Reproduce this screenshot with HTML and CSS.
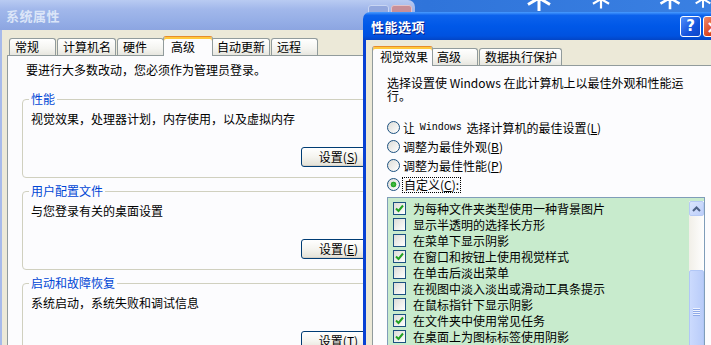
FILE: index.html
```html
<!DOCTYPE html>
<html lang="zh-CN">
<head>
    <meta charset="UTF-8">
    <title>系统属性 - 性能选项</title>
    <link rel="stylesheet" href="styles.css">
</head>
<body>
<div class="desktop">
    <svg class="flake flake-a" width="30" height="30" viewBox="-15 -15 30 30"><path d="M0 -13 V13 M-11 -6.5 L11 6.5 M-11 6.5 L11 -6.5" stroke="#fff" stroke-width="3"/></svg>
    <svg class="flake flake-b" width="22" height="22" viewBox="-15 -15 30 30"><path d="M0 -13 V13 M-11 -6.5 L11 6.5 M-11 6.5 L11 -6.5" stroke="#fff" stroke-width="3"/></svg>
    <svg class="flake flake-c" width="26" height="26" viewBox="-15 -15 30 30"><path d="M0 -13 V13 M-11 -6.5 L11 6.5 M-11 6.5 L11 -6.5" stroke="#fff" stroke-width="3"/></svg>
    <svg class="flake flake-d" width="20" height="20" viewBox="-15 -15 30 30"><path d="M0 -13 V13 M-11 -6.5 L11 6.5 M-11 6.5 L11 -6.5" stroke="#fff" stroke-width="3"/></svg>

    <div class="window sysprops">
        <div class="titlebar">
            <span class="title">系统属性</span>
            <span class="title-buttons">
                <span class="tbtn help"></span>
                <span class="tbtn close"></span>
            </span>
        </div>
        <div class="window-body">
            <ul class="tabs">
                <li class="tab">常规</li>
                <li class="tab">计算机名</li>
                <li class="tab">硬件</li>
                <li class="tab active">高级</li>
                <li class="tab">自动更新</li>
                <li class="tab">远程</li>
            </ul>
            <div class="tab-panel">
                <p class="note">要进行大多数改动，您必须作为管理员登录。</p>

                <fieldset class="group">
                    <legend>性能</legend>
                    <p>视觉效果，处理器计划，内存使用，以及虚拟内存</p>
                    <div class="group-actions"><button class="xp-button">设置(<u>S</u>)</button></div>
                </fieldset>

                <fieldset class="group">
                    <legend>用户配置文件</legend>
                    <p>与您登录有关的桌面设置</p>
                    <div class="group-actions"><button class="xp-button">设置(<u>E</u>)</button></div>
                </fieldset>

                <fieldset class="group">
                    <legend>启动和故障恢复</legend>
                    <p>系统启动，系统失败和调试信息</p>
                    <div class="group-actions"><button class="xp-button">设置(<u>T</u>)</button></div>
                </fieldset>
            </div>
        </div>
    </div>

    <div class="window perfopts">
        <div class="titlebar">
            <span class="title">性能选项</span>
            <span class="title-buttons">
                <span class="tbtn help">?</span>
                <span class="tbtn close">×</span>
            </span>
        </div>
        <div class="window-body">
            <ul class="tabs">
                <li class="tab active">视觉效果</li>
                <li class="tab">高级</li>
                <li class="tab">数据执行保护</li>
            </ul>
            <div class="tab-panel">
                <p class="intro">选择设置使 Windows 在此计算机上以最佳外观和性能运行。</p>

                <ul class="options">
                    <li class="option"><span class="radio"></span>让 <span class="latin">Windows</span> 选择计算机的最佳设置(<u>L</u>)</li>
                    <li class="option"><span class="radio"></span>调整为最佳外观(<u>B</u>)</li>
                    <li class="option"><span class="radio"></span>调整为最佳性能(<u>P</u>)</li>
                    <li class="option"><span class="radio checked"></span><span class="focus">自定义(<u>C</u>):</span></li>
                </ul>

                <div class="effects">
                    <ul class="effect-list">
                        <li class="effect"><span class="check"><svg width="11" height="11" viewBox="0 0 11 11"><path d="M2 5.5 L4.5 8 L9 2.5" fill="none" stroke="#21a121" stroke-width="2"/></svg></span>为每种文件夹类型使用一种背景图片</li>
                        <li class="effect"><span class="check"></span>显示半透明的选择长方形</li>
                        <li class="effect"><span class="check"></span>在菜单下显示阴影</li>
                        <li class="effect"><span class="check"><svg width="11" height="11" viewBox="0 0 11 11"><path d="M2 5.5 L4.5 8 L9 2.5" fill="none" stroke="#21a121" stroke-width="2"/></svg></span>在窗口和按钮上使用视觉样式</li>
                        <li class="effect"><span class="check"></span>在单击后淡出菜单</li>
                        <li class="effect"><span class="check"></span>在视图中淡入淡出或滑动工具条提示</li>
                        <li class="effect"><span class="check"></span>在鼠标指针下显示阴影</li>
                        <li class="effect"><span class="check"><svg width="11" height="11" viewBox="0 0 11 11"><path d="M2 5.5 L4.5 8 L9 2.5" fill="none" stroke="#21a121" stroke-width="2"/></svg></span>在文件夹中使用常见任务</li>
                        <li class="effect"><span class="check"><svg width="11" height="11" viewBox="0 0 11 11"><path d="M2 5.5 L4.5 8 L9 2.5" fill="none" stroke="#21a121" stroke-width="2"/></svg></span>在桌面上为图标标签使用阴影</li>
                    </ul>
                    <div class="scrollbar">
                        <span class="scroll-arrow">
                            <svg width="9" height="6" viewBox="0 0 9 6"><path d="M1 5 L4.5 1.5 L8 5" fill="none" stroke="#4d6185" stroke-width="2"/></svg>
                        </span>
                        <span class="scroll-thumb"><span class="grip"></span></span>
                    </div>
                </div>
            </div>
        </div>
    </div>
</div>
</body>
</html>
```

FILE: styles.css
```css
* {
    box-sizing: border-box;
}
body {
    margin: 0;
    font-family: "Noto Sans CJK SC", "Noto Sans", sans-serif;
    font-size: 12px;
    color: #000;
    background-color: #3b7fdc;
}
.desktop {
    position: relative;
    width: 711px;
    height: 345px;
    overflow: hidden;
    background: linear-gradient(90deg, #4a88e2, #2f74da 60%, #3a80e2);
}
.flake {
    position: absolute;
}
.flake-a { left: 524px; top: -17px; }
.flake-b { left: 590px; top: -12px; }
.flake-c { left: 657px; top: -15px; }
.flake-d { left: 693px; top: -11px; }

/* windows */
.window {
    position: absolute;
    display: flex;
    flex-direction: column;
}
.sysprops {
    left: 0;
    top: 0;
    width: 415px;
    height: 345px;
}
.perfopts {
    left: 363px;
    top: 12px;
    width: 364px;
    height: 333px;
}
.titlebar {
    display: flex;
    align-items: center;
    flex: none;
    padding: 0 3px 0 6px;
}
.sysprops .titlebar {
    height: 30px;
    border-top-right-radius: 7px;
    background: linear-gradient(#b9cbf2, #a2b8eb 30%, #95aee6 70%, #8ca5e1);
}
.perfopts .titlebar {
    height: 28px;
    padding-left: 8px;
    border-radius: 7px 7px 0 0;
    background: linear-gradient(#4a9cff, #0c62ec 12%, #0058e8 50%, #0052e0 85%, #0345c6);
}
.title {
    font-weight: bold;
    font-size: 13px;
    letter-spacing: 0.5px;
}
.sysprops .title {
    color: #dbe5f8;
}
.perfopts .title {
    color: #fff;
    text-shadow: 1px 1px 0 #0a1e8a;
}
.title-buttons {
    margin-left: auto;
    display: flex;
    gap: 2px;
}
.tbtn {
    width: 21px;
    height: 21px;
    border: 1px solid #fff;
    border-radius: 3px;
    display: flex;
    align-items: center;
    justify-content: center;
    color: #fff;
    font-family: "DejaVu Sans", sans-serif;
    font-weight: bold;
    font-size: 15px;
}
.sysprops .tbtn.help {
    background: #93a8de;
    border-color: #c9d6f3;
}
.sysprops .tbtn.close {
    background: #c88f98;
    border-color: #e3c3c8;
}
.perfopts .tbtn.help {
    background: linear-gradient(135deg, #4f8ffb, #1553dd 60%, #0c45c8);
}
.perfopts .tbtn.close {
    background: linear-gradient(135deg, #f08a6a, #d9431d 60%, #c2360f);
    font-size: 18px;
}

.window-body {
    flex: 1;
    display: flex;
    flex-direction: column;
    background-color: #ece9d8;
}
.sysprops .window-body {
    padding: 6px 7px 0 5px;
    border-left: 2px solid #a7baea;
    border-right: 2px solid #a7baea;
}
.perfopts .window-body {
    padding: 6px 6px 0 6px;
    border-left: 3px solid #0841d4;
    border-right: 3px solid #0841d4;
}

/* tabs */
.tabs {
    list-style: none;
    margin: 0;
    padding: 0 0 0 2px;
    display: flex;
    align-items: flex-end;
    height: 19px;
    flex: none;
}
.tab {
    min-width: 47px;
    height: 17px;
    padding: 0 4px 0 5px;
    margin-right: 1px;
    border: 1px solid #919b9c;
    border-bottom: none;
    border-radius: 3px 3px 0 0;
    background: linear-gradient(#fff, #f4f4f0 60%, #e7e6df);
    line-height: 16px;
    white-space: nowrap;
}
.tab.active {
    position: relative;
    z-index: 1;
    height: 20px;
    min-width: 50px;
    margin: 0 -2px -1px;
    padding: 0 4px 0 7px;
    border-top: 1px solid #e68b2c;
    background: #fcfcfe;
    box-shadow: inset 0 2px 0 #ffc83c;
    line-height: 19px;
}
.tab-panel {
    flex: 1;
    background-color: #fcfcfe;
    border: 1px solid #919b9c;
    border-bottom: none;
}

/* system properties panel */
.sysprops .tab-panel {
    padding: 7px 14px 0 14px;
}
.note {
    margin: 0 0 0 4px;
    line-height: 14px;
}
.group {
    margin: 15px 0 0;
    padding: 6px 14px 10px 6px;
    border: 1px solid #d0d0bf;
    border-radius: 4px;
    min-width: 0;
}
.group + .group {
    margin-top: 6px;
}
.group legend {
    padding: 0 2px;
    color: #0046d5;
    line-height: 14px;
}
.group p {
    margin: 0 0 0 2px;
    line-height: 14px;
}
.group-actions {
    display: flex;
    justify-content: flex-end;
    margin-top: 21px;
}
.xp-button {
    width: 75px;
    height: 20px;
    padding: 0;
    font: inherit;
    color: #000;
    line-height: 18px;
    border: 1px solid #003c74;
    border-radius: 3px;
    background: linear-gradient(#fff, #f5f4ef 50%, #e3e1d6);
    box-shadow: inset -1px -1px 0 #d6d0c5;
}

/* performance options panel */
.perfopts .tab-panel {
    padding: 10px 12px 0 14px;
}
.intro {
    margin: 0;
    width: 300px;
    line-height: 13px;
}
.latin {
    font-family: "Liberation Mono", monospace;
    font-size: 10px;
    line-height: 10px;
    margin: 0 2px;
}
.options {
    list-style: none;
    margin: 16px 0 0;
    padding: 0;
}
.option {
    display: flex;
    align-items: center;
    height: 19px;
    white-space: pre;
}
.radio {
    width: 13px;
    height: 13px;
    margin-right: 3px;
    border: 1px solid #1c5180;
    border-radius: 50%;
    background: linear-gradient(135deg, #dcdcd7, #fff);
}
.radio.checked {
    background: radial-gradient(circle, #4cc04c 0, #21a121 2.5px, transparent 3.2px), linear-gradient(135deg, #dcdcd7, #fff);
}
.focus {
    outline: 1px dotted #000;
    padding: 0 1px;
    line-height: 14px;
}
.effects {
    display: flex;
    height: 160px;
    margin-top: 3px;
    border: 1px solid #7f9db9;
    background-color: #c8ebcd;
}
.effect-list {
    flex: 1;
    list-style: none;
    margin: 0;
    padding: 2px 0 0;
}
.effect {
    display: flex;
    align-items: center;
    height: 16px;
    padding-left: 5px;
}
.check {
    width: 13px;
    height: 13px;
    margin-right: 7px;
    flex: none;
    display: flex;
    border: 1px solid #1c5180;
    background: linear-gradient(135deg, #dcdcd7, #fff);
}
.scrollbar {
    width: 15px;
    margin-top: 3px;
    display: flex;
    flex-direction: column;
    background: linear-gradient(90deg, #f1efe8, #fefefe);
}
.scroll-arrow {
    height: 15px;
    flex: none;
    display: flex;
    align-items: center;
    justify-content: center;
    border: 1px solid #b6caf5;
    border-radius: 2px;
    background: linear-gradient(135deg, #dbe6fd, #bccefa);
}
.scroll-thumb {
    height: 84px;
    margin-top: 54px;
    flex: none;
    display: flex;
    align-items: center;
    justify-content: center;
    border: 1px solid #b1c7f6;
    border-radius: 2px;
    background: linear-gradient(90deg, #cbdafd, #b9ccf9);
}
.grip {
    width: 7px;
    height: 8px;
    background: repeating-linear-gradient(#eef3fe 0 1px, #8faae8 1px 2px);
}
```
